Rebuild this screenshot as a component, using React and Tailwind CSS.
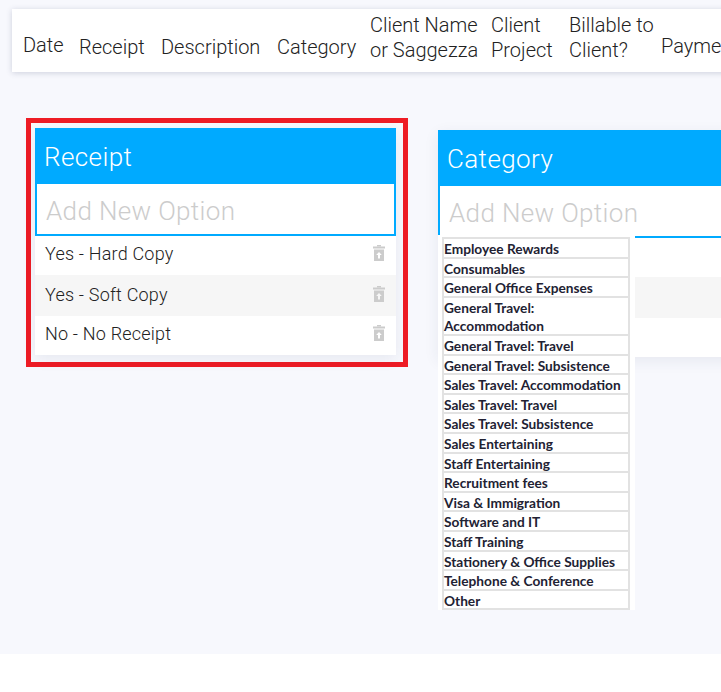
const columns = [
  { label: ['Date'], width: 'w-[56px]', offset: 'mt-[10px]' },
  { label: ['Receipt'], width: 'w-[82px]', offset: 'mt-[13px]' },
  { label: ['Description'], width: 'w-[116px]', offset: 'mt-[13px]' },
  { label: ['Category'], width: 'w-[93px]', offset: 'mt-[13px]' },
  { label: ['Client Name', 'or Saggezza'], width: 'w-[121px]', offset: 'mt-[-5px]' },
  { label: ['Client', 'Project'], width: 'w-[78px]', offset: 'mt-[-5px]' },
  { label: ['Billable to', 'Client?'], width: 'w-[92px]', offset: 'mt-[-5px]' },
  { label: ['Payment'], width: 'w-[90px]', offset: 'mt-[12px]' },
]

const receiptOptions = ['Yes - Hard Copy', 'Yes - Soft Copy', 'No - No Receipt']

const categories = [
  ['Employee Rewards'],
  ['Consumables'],
  ['General Office Expenses'],
  ['General Travel:', 'Accommodation'],
  ['General Travel: Travel'],
  ['General Travel: Subsistence'],
  ['Sales Travel: Accommodation'],
  ['Sales Travel: Travel'],
  ['Sales Travel: Subsistence'],
  ['Sales Entertaining'],
  ['Staff Entertaining'],
  ['Recruitment fees'],
  ['Visa & Immigration'],
  ['Software and IT'],
  ['Staff Training'],
  ['Stationery & Office Supplies'],
  ['Telephone & Conference'],
  ['Other'],
]

const TrashIcon = () => (
  <svg width="12" height="16" viewBox="0 0 12 16" className="shrink-0">
    <rect x="4" y="0" width="4" height="1.5" fill="#cccccc" />
    <rect x="0" y="1.5" width="12" height="2" fill="#cccccc" />
    <path d="M1 4.5h10V16H1z M6 7L3.2 10H5v3.5h2V10h1.8z" fill="#cccccc" fillRule="evenodd" />
  </svg>
)

const OptionCard = ({ title, options, className, children }) => (
  <div className={`relative shrink-0 shadow-[0_4px_14px_rgba(40,50,90,0.08)] ${className}`}>
    <div className="flex h-[56px] items-center bg-[#00aaff] pl-[9px] pt-[3px] text-[26px] font-light tracking-[0.4px] text-white">
      {title}
    </div>
    <div className="flex h-[52px] items-center border-2 border-t-0 border-[#00aaff] bg-white pl-[9px] pt-[5px] text-[26px] font-light tracking-[0.35px] text-[#cccccc]">
      Add New Option
    </div>
    {options.map((option, i) => (
      <div
        key={i}
        className={`flex items-center justify-between pl-[10px] pr-[11px] text-[18px] font-light tracking-[0.2px] text-[#222222] ${
          i === 1 ? 'h-[41px] bg-[#f6f6f6] pb-[3px]' : 'h-[39px] bg-white pb-[5px]'
        }`}
      >
        <span>{option}</span>
        <TrashIcon />
      </div>
    ))}
    {children}
  </div>
)

const CategoryTable = () => (
  <div className="absolute left-0 top-[105px] w-[197px] bg-white pl-[4px] pt-[2px] font-['Lato',sans-serif] text-[13.7px] font-bold leading-[17.6px] text-[#222233]">
    <div className="w-[188px] border-2 border-b-0 border-[#e2e2e2]">
      {categories.map((lines) => (
        <div key={lines[0]} className="border-b-2 border-[#e2e2e2] pt-[1px] h-auto">
          {lines.map((line, i) => (
            <div key={line} className={`-mb-[1px] whitespace-nowrap ${i > 0 ? 'pt-[2px]' : ''}`}>
              {line}
            </div>
          ))}
        </div>
      ))}
    </div>
  </div>
)

export default function App() {
  return (
    <div className="h-[692px] w-[721px] overflow-hidden bg-white font-['Roboto',sans-serif]">
      <div className="h-[654px] bg-[#f7f8fd] pl-[12px] pt-[9px]">
        <div className="flex h-[63px] w-[760px] items-center bg-white pl-[11px] text-[20px] font-light leading-[25px] text-[#222222] shadow-[0_1px_6px_rgba(40,50,90,0.2)]">
          {columns.map((col) => (
            <div key={col.label[0]} className={`shrink-0 whitespace-nowrap ${col.width} ${col.offset}`}>
              {col.label.map((line) => (
                <div key={line}>{line}</div>
              ))}
            </div>
          ))}
        </div>
        <div className="mt-[46px] flex items-start">
          <div className="ml-[14px] w-[382px] shrink-0 border-[5px] border-[#ee1c25] pb-[7px] pl-[4px] pr-[7px] pt-[5px]">
            <OptionCard title="Receipt" options={receiptOptions} className="w-[361px]" />
          </div>
          <OptionCard title="Category" options={['', '', '']} className="ml-[30px] mt-[12px] w-[400px]">
            <CategoryTable />
          </OptionCard>
        </div>
      </div>
    </div>
  )
}
